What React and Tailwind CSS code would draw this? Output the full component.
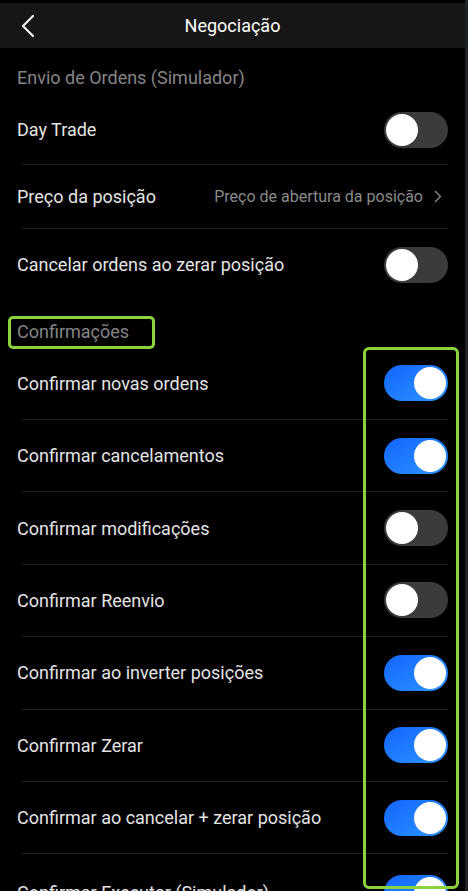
import React, {useState} from 'react'

function Toggle({on, onChange}){
  return (
    <button onClick={onChange} className={`relative w-[64px] h-[36px] rounded-full shrink-0 ${on ? 'bg-gradient-to-br from-[#1565ff] to-[#2f93ff]' : 'bg-[#3b3b3b]'}`}>
      <span className={`absolute top-[2px] w-[32px] h-[32px] rounded-full bg-white ${on ? 'left-[30px]' : 'left-[2px]'}`}></span>
    </button>
  )
}

function Row({label, on, onToggle, first, h}){
  return (
    <div className={`flex items-center ${h} ${first ? '' : 'border-t border-[#1f1f1f] ml-[5px]'}`}>
      <span className={`flex-1 text-[18px] text-[#e4e4e4] whitespace-nowrap ${first ? '' : '-ml-[5px]'}`}>{label}</span>
      <Toggle on={on} onChange={onToggle} />
    </div>
  )
}

export default function App(){
  const [envio, setEnvio] = useState({dayTrade: false, cancelar: false})
  const [conf, setConf] = useState([
    {label: 'Confirmar novas ordens', on: true},
    {label: 'Confirmar cancelamentos', on: true},
    {label: 'Confirmar modificações', on: false},
    {label: 'Confirmar Reenvio', on: false},
    {label: 'Confirmar ao inverter posições', on: true},
    {label: 'Confirmar Zerar', on: true},
    {label: 'Confirmar ao cancelar + zerar posição', on: true},
    {label: 'Confirmar Executar (Simulador)', on: true},
  ])

  const flip = i => setConf(c => c.map((r, j) => j === i ? {...r, on: !r.on} : r))
  const rowH = i => i === 0 ? 'h-[72px]' : i === conf.length - 1 ? 'h-[78px]' : 'h-[72.4px]'

  return (
    <div className="relative w-[468px] h-[891px] overflow-hidden bg-black flex" style={{fontFamily: 'Roboto, "Noto Sans", sans-serif'}}>
      <div className="flex-1 flex flex-col">
        <div className="pt-[3px]">
          <div className="relative h-[45px] bg-[#161616] flex items-center justify-center">
            <svg className="absolute left-[20px] top-[11px]" width="16" height="24" viewBox="0 0 16 24" fill="none">
              <path d="M13 2 L3 12 L13 22" stroke="#f2f2f2" strokeWidth="2.2" strokeLinecap="round" strokeLinejoin="round" />
            </svg>
            <span className="text-[18px] text-white">Negociação</span>
          </div>
        </div>

        <div className="px-[17px]">
          <div className="h-[47px] pt-[20px] text-[18px] leading-[20px] text-[#858585]">Envio de Ordens (Simulador)</div>
          <Row first label="Day Trade" h="h-[69px]" on={envio.dayTrade} onToggle={() => setEnvio(e => ({...e, dayTrade: !e.dayTrade}))} />
          <div className="flex items-center h-[64px] border-t border-[#1f1f1f] ml-[5px]">
            <span className="flex-1 -ml-[5px] text-[18px] text-[#e4e4e4]">Preço da posição</span>
            <span className="text-[16px] text-[#8a8a8a]">Preço de abertura da posição</span>
            <svg className="ml-[11px] mr-[6px]" width="8" height="13" viewBox="0 0 8 13" fill="none">
              <path d="M1.5 1.5 L6.5 6.5 L1.5 11.5" stroke="#8a8a8a" strokeWidth="1.4" strokeLinecap="round" strokeLinejoin="round" />
            </svg>
          </div>
          <div className="flex items-center h-[72px] border-t border-[#1f1f1f] ml-[5px]">
            <span className="flex-1 -ml-[5px] text-[18px] text-[#e4e4e4]">Cancelar ordens ao zerar posição</span>
            <Toggle on={envio.cancelar} onChange={() => setEnvio(e => ({...e, cancelar: !e.cancelar}))} />
          </div>

          <div className="h-[47px] pt-[22px] text-[18px] leading-[20px] text-[#858585]">Confirmações</div>
          {conf.map((r, i) => (
            <Row key={r.label} first={i === 0} label={r.label} h={rowH(i)} on={r.on} onToggle={() => flip(i)} />
          ))}
        </div>
      </div>
      <div className="w-[3px] bg-[#1b2129]"></div>

      {/* highlight boxes */}
      <div className="absolute left-[8px] top-[316px] w-[147px] h-[33px] border-[3px] border-[#8bd43c] rounded-[5px] pointer-events-none"></div>
      <div className="absolute left-[363px] top-[347px] w-[96px] h-[542px] border-[3px] border-[#8bd43c] rounded-[6px] pointer-events-none"></div>
    </div>
  )
}
